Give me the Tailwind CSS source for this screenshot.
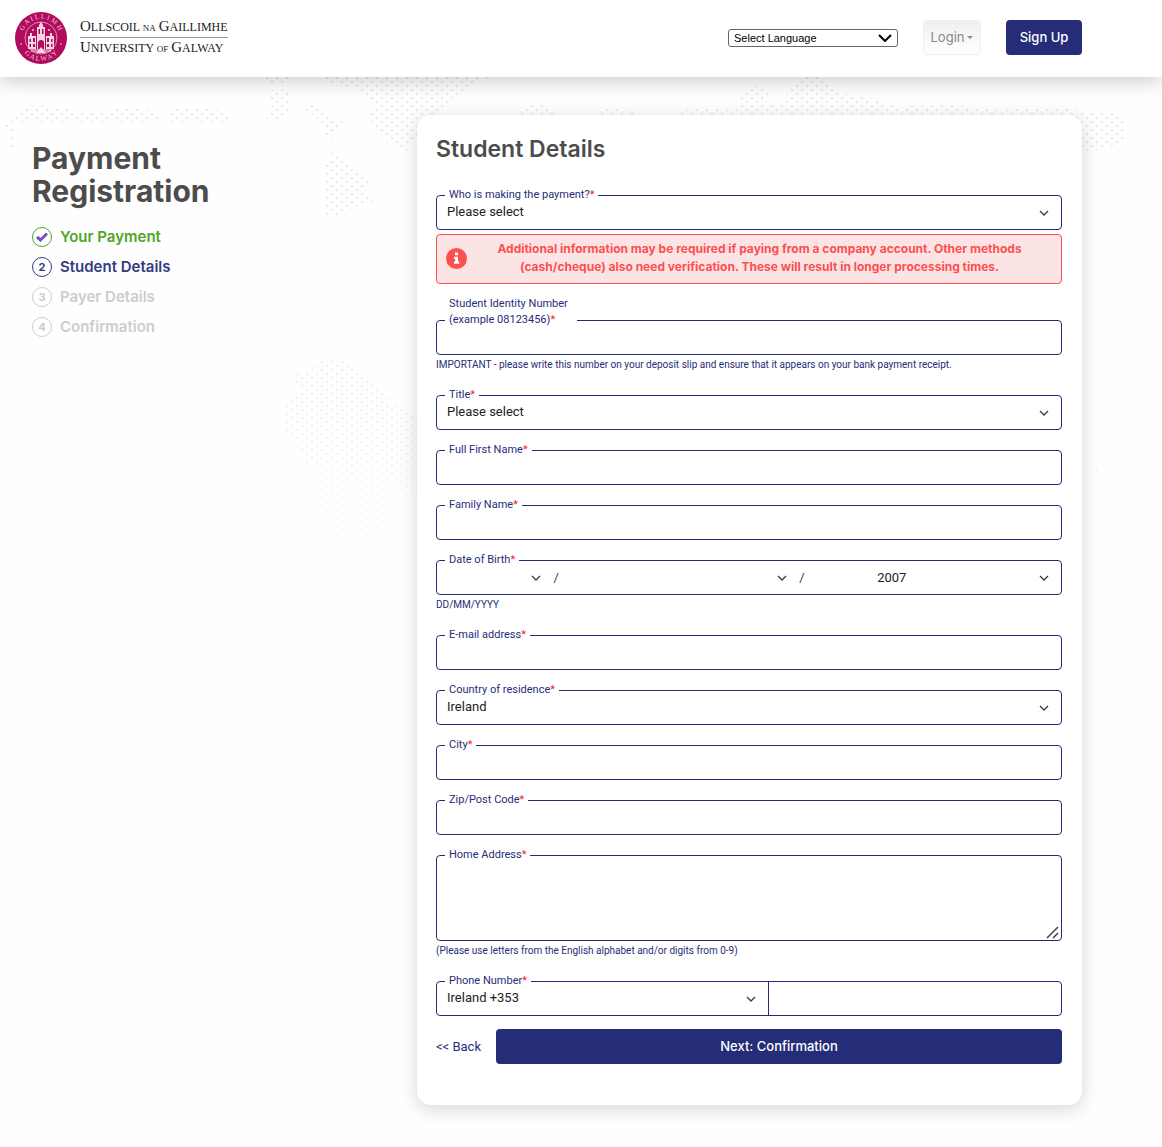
<!DOCTYPE html>
<html lang="en">
<head>
<meta charset="utf-8">
<meta name="viewport" content="width=device-width, initial-scale=1">
<title>Payment Registration</title>
<script src="https://cdn.jsdelivr.net/npm/@tailwindcss/browser@4"></script>
</head>
<body class="relative min-h-screen overflow-x-hidden bg-[#fefefe] font-['Roboto',sans-serif] text-[#262d78]">

<!-- dotted world map behind the page -->
<svg class="pointer-events-none absolute top-0 left-0 -z-10" width="1162" height="620" aria-hidden="true">
  <defs>
    <pattern id="dots" width="10" height="8" patternUnits="userSpaceOnUse">
      <circle cx="2" cy="2" r="1.3" fill="#e8e8e8"/><circle cx="7" cy="6" r="1.3" fill="#e8e8e8"/>
    </pattern>
    <linearGradient id="fade" x1="0" y1="0" x2="0" y2="1">
      <stop offset="0" stop-color="#fff"/><stop offset=".2" stop-color="#fff" stop-opacity=".95"/>
      <stop offset=".65" stop-color="#fff" stop-opacity=".6"/><stop offset=".97" stop-color="#fff" stop-opacity="0"/>
    </linearGradient>
    <mask id="m"><rect width="1162" height="620" fill="url(#fade)"/></mask>
  </defs>
  <g fill="url(#dots)" mask="url(#m)">
    <path d="M8 122 20 108 45 105 90 113 130 107 160 112V122zM165 122 175 108 210 107 232 117 240 122zM5 125H13V150H9V132L5 128z"/>
    <path d="M266 77H295L284 84H266zM270 90H290V108L279 122H265L272 108z"/>
    <path d="M322 77H490L470 88 455 95 432 118 417 140 405 152 390 144 376 132 368 112 374 104 360 90 330 84z"/>
    <path d="M305 109 312 103 328 114 345 123 335 130 333 138 325 136 322 122zM325 162 335 150 352 170 370 178 366 190 376 202 360 204 345 215H325z"/>
    <path d="M510 122 535 102 550 108 560 122zM590 122 610 106 640 114 655 122zM668 122 690 108 740 110 740 98 752 84 775 92 765 104 780 104 800 77H822L835 92 870 98 900 107 950 104 1000 110 1060 106 1085 112 1110 110 1125 117V140L1105 150H1082V122z"/>
    <path d="M286 402 298 390 294 374 310 372 325 358 345 362 365 376 382 388 390 402 417 415V495L395 502 388 520 372 542 350 560 335 575 328 600H308L315 548 322 530V472L304 462 298 446 285 430z"/>
    <path d="M1083 455H1088V462H1083zM1092 466H1098V474H1092zM1115 550H1125V566H1115z"/>
  </g>
</svg>

<header class="flex h-[77px] items-center justify-between bg-white pr-20 pb-[2px] pl-[14px] shadow-[0_4px_18px_rgba(0,0,0,0.2)]">
  <a href="#" class="flex items-center gap-3" aria-label="University of Galway">
    <svg width="54" height="54" viewBox="0 0 54 54" aria-hidden="true">
      <circle cx="27" cy="27" r="26" fill="#b00b5c"/>
      <circle cx="27" cy="27" r="16" fill="none" stroke="#dc93b8" stroke-width="1"/>
      <defs>
        <path id="arcTop" d="M8.500 31 A19 19 0 1 1 45.500 31"/>
        <path id="arcBottom" d="M5.500 34 A22.500 22.500 0 0 0 48.500 34"/>
      </defs>
      <g fill="#f0cade" font-family="Liberation Serif, serif" font-size="7">
        <text text-anchor="middle"><textPath href="#arcTop" startOffset="50%">G A I L L I M H</textPath></text>
        <text text-anchor="middle"><textPath href="#arcBottom" startOffset="50%">G A L W A Y</textPath></text>
      </g>
      <circle cx="7" cy="33" r=".8" fill="#f0cade"/><circle cx="47" cy="33" r=".8" fill="#f0cade"/>
      <g fill="#f3d5e4">
        <path d="M25 14 27 10.500 29 14V16H31V25H23V16H25z"/>
        <path d="M14 25H16V22H18V25H36V22H38V25H40V38H14z"/>
        <path d="M17 38H37V41H17z" opacity=".6"/>
      </g>
      <g fill="#b00b5c">
        <path d="M24.500 18H26V23H24.500zM28 18H29.500V23H28zM15.500 28H17V31H15.500zM15.500 33H17V36H15.500zM19 27H21V31H19zM19 33H21V36H19zM33 27H35V31H33zM33 33H35V36H33zM37 28H38.500V31H37zM37 33H38.500V36H37z"/>
        <path d="M24 38V32a3 3 0 0 1 6 0V38z"/>
        <path d="M22.500 25V38M31.500 25V38" stroke="#b00b5c"/>
        <path d="M18 18H20V20H18zM34 18H36V20H34z" fill="#dc93b8"/>
      </g>
      <path d="M22 42 27 36 32 42" fill="#f3d5e4"/>
    </svg>
    <span class="flex flex-col font-['Liberation_Serif',serif] text-[12px] leading-[18px] whitespace-nowrap text-[#222]">
      <span class="border-b border-[#999]"><span class="text-[15px]">O</span>LLSCOIL <span class="text-[9px]">NA</span> <span class="text-[15px]">G</span>AILLIMHE</span>
      <span><span class="text-[15px]">U</span>NIVERSITY <span class="text-[9px]">OF</span> <span class="text-[15px]">G</span>ALWAY</span>
    </span>
  </a>
  <div class="flex items-center gap-[25px]">
    <div class="grid w-[170px] items-center">
      <select aria-label="Select Language" class="col-start-1 row-start-1 h-[18px] appearance-none rounded-[3px] border border-[#666] bg-white pl-[5px] font-['Liberation_Sans',sans-serif] text-[11px] leading-4 text-black"><option>Select Language</option></select>
      <svg class="pointer-events-none col-start-1 row-start-1 mr-[6px] justify-self-end" width="14" height="8" viewBox="0 0 14 8" fill="none" stroke="#000" stroke-width="2" aria-hidden="true"><path d="M1 1 7 7 13 1"/></svg>
    </div>
    <button type="button" class="flex h-[35px] w-[58px] items-center justify-center gap-[3px] rounded-[4px] border border-[#efefef] bg-linear-to-b from-[#efefef] to-white font-['Inter',sans-serif] text-[13px] text-[#888]">Login
      <svg width="6" height="3" viewBox="0 0 6 3" fill="#888" aria-hidden="true"><path d="M0 0H6L3 3z"/></svg>
    </button>
    <button type="button" class="h-[35px] w-[76px] rounded-[4px] bg-[#262d78] font-['Inter',sans-serif] text-[13px] font-medium text-white">Sign Up</button>
  </div>
</header>

<main class="grid grid-cols-[385fr_665fr] items-start pt-[38px] pr-20 pb-[42px] pl-8">
  <aside class="pt-[27px] font-['Inter',sans-serif]">
    <h1 class="w-[180px] text-[30px] leading-[33px] font-bold text-[#4c4c4c]">Payment Registration</h1>
    <ol class="mt-[19px] flex flex-col gap-[10px] text-[15px] leading-5 font-semibold">
      <li class="flex items-center gap-2 text-[#4fa626]">
        <span class="flex size-5 items-center justify-center rounded-full border border-[#4fa626] bg-white"><svg width="12" height="10" viewBox="0 0 12 10" fill="none" stroke="#7a50c0" stroke-width="3" aria-hidden="true"><path d="M1 5 4.500 8 11 1.500"/></svg></span>Your Payment</li>
      <li class="flex items-center gap-2 text-[#343a82]"><span class="flex size-5 items-center justify-center rounded-full border border-[#343a82] bg-white text-[11px] font-bold">2</span>Student Details</li>
      <li class="flex items-center gap-2 text-[#cdcdcd]"><span class="flex size-5 items-center justify-center rounded-full border border-[#cdcdcd] bg-white text-[11px] font-bold">3</span>Payer Details</li>
      <li class="flex items-center gap-2 text-[#cdcdcd]"><span class="flex size-5 items-center justify-center rounded-full border border-[#cdcdcd] bg-white text-[11px] font-bold">4</span>Confirmation</li>
    </ol>
  </aside>

  <section class="rounded-[14px] bg-white pt-[18px] pr-5 pb-[41px] pl-[19px] shadow-[0_4px_18px_rgba(0,0,0,0.16)]">
    <h2 class="font-['Inter',sans-serif] text-[23px] leading-8 font-semibold text-[#4c4c4c]">Student Details</h2>

    <form class="mt-[22px] flex flex-col gap-3">
      <div class="flex flex-col">
        <label for="payer" class="z-10 ml-[9px] -mb-2 self-start bg-white px-1 text-[11px] leading-4">Who is making the payment?<span class="text-[#ff1a1a]">*</span></label>
        <div class="grid items-center">
          <select id="payer" class="col-start-1 row-start-1 h-[35px] appearance-none rounded-[4px] border border-[#262d78] bg-white px-[10px] pb-[2px] text-[13px] text-[#222]"><option>Please select</option></select>
          <svg class="pointer-events-none col-start-1 row-start-1 mr-[13px] justify-self-end" width="10" height="6" viewBox="0 0 10 6" fill="none" stroke="#343a40" stroke-width="1.300" aria-hidden="true"><path d="M1 1 5 5 9 1"/></svg>
        </div>
        <div class="mt-1 flex items-center rounded-[4px] border border-[#fb5050] bg-[#fde4e4] pt-[5px] pr-[9px] pb-[7px] pl-[9px] text-[#fb5050]">
          <svg width="21" height="21" viewBox="0 0 21 21" aria-hidden="true"><circle cx="10.500" cy="10.500" r="10.500" fill="#fb5050"/><path d="M9 4.500H12V7.300H9zM8 8.700H12V13.500H13.200V15.700H8V13.500H9.200V10.800H8z" fill="#fff"/></svg>
          <p class="mx-auto text-center font-['Inter',sans-serif] text-[12px] leading-[18px] font-bold">Additional information may be required if paying from a company account. Other methods<br>(cash/cheque) also need verification. These will result in longer processing times.</p>
        </div>
      </div>

      <div class="flex flex-col">
        <label for="sid" class="z-10 ml-[9px] -mb-2 w-[132px] self-start bg-white px-1 text-[11px] leading-4">Student Identity Number (example 08123456)<span class="text-[#ff1a1a]">*</span></label>
        <input id="sid" type="text" class="h-[35px] rounded-[4px] border border-[#262d78] bg-white px-[10px] text-[13px]">
        <p class="text-[10px] leading-5">IMPORTANT - please write this number on your deposit slip and ensure that it appears on your bank payment receipt.</p>
      </div>

      <div class="flex flex-col">
        <label for="title" class="z-10 ml-[9px] -mb-2 self-start bg-white px-1 text-[11px] leading-4">Title<span class="text-[#ff1a1a]">*</span></label>
        <div class="grid items-center">
          <select id="title" class="col-start-1 row-start-1 h-[35px] appearance-none rounded-[4px] border border-[#262d78] bg-white px-[10px] pb-[2px] text-[13px] text-[#222]"><option>Please select</option></select>
          <svg class="pointer-events-none col-start-1 row-start-1 mr-[13px] justify-self-end" width="10" height="6" viewBox="0 0 10 6" fill="none" stroke="#343a40" stroke-width="1.300" aria-hidden="true"><path d="M1 1 5 5 9 1"/></svg>
        </div>
      </div>

      <div class="flex flex-col">
        <label for="first" class="z-10 ml-[9px] -mb-2 self-start bg-white px-1 text-[11px] leading-4">Full First Name<span class="text-[#ff1a1a]">*</span></label>
        <input id="first" type="text" class="h-[35px] rounded-[4px] border border-[#262d78] bg-white px-[10px] text-[13px]">
      </div>

      <div class="flex flex-col">
        <label for="family" class="z-10 ml-[9px] -mb-2 self-start bg-white px-1 text-[11px] leading-4">Family Name<span class="text-[#ff1a1a]">*</span></label>
        <input id="family" type="text" class="h-[35px] rounded-[4px] border border-[#262d78] bg-white px-[10px] text-[13px]">
      </div>

      <div class="flex flex-col">
        <label for="day" class="z-10 ml-[9px] -mb-2 self-start bg-white px-1 text-[11px] leading-4">Date of Birth<span class="text-[#ff1a1a]">*</span></label>
        <div class="grid h-[35px] grid-cols-[116fr_8px_237fr_8px_253fr] items-center rounded-[4px] border border-[#262d78] bg-white text-[13px] text-[#444]">
          <div class="grid items-center">
            <select id="day" aria-label="Day of birth" class="col-start-1 row-start-1 h-8 w-full appearance-none px-[10px]"><option></option></select>
            <svg class="pointer-events-none col-start-1 row-start-1 mr-[12px] justify-self-end" width="10" height="6" viewBox="0 0 10 6" fill="none" stroke="#343a40" stroke-width="1.300" aria-hidden="true"><path d="M1 1 5 5 9 1"/></svg>
          </div>
          <span>/</span>
          <div class="grid items-center">
            <select aria-label="Month of birth" class="col-start-1 row-start-1 h-8 w-full appearance-none px-[10px]"><option></option></select>
            <svg class="pointer-events-none col-start-1 row-start-1 mr-[12px] justify-self-end" width="10" height="6" viewBox="0 0 10 6" fill="none" stroke="#343a40" stroke-width="1.300" aria-hidden="true"><path d="M1 1 5 5 9 1"/></svg>
          </div>
          <span>/</span>
          <div class="grid items-center">
            <select aria-label="Year of birth" class="col-start-1 row-start-1 h-8 w-full appearance-none pr-[10px] pl-[70px] text-[#222]"><option>2007</option></select>
            <svg class="pointer-events-none col-start-1 row-start-1 mr-[12px] justify-self-end" width="10" height="6" viewBox="0 0 10 6" fill="none" stroke="#343a40" stroke-width="1.300" aria-hidden="true"><path d="M1 1 5 5 9 1"/></svg>
          </div>
        </div>
        <p class="text-[10px] leading-5">DD/MM/YYYY</p>
      </div>

      <div class="flex flex-col">
        <label for="email" class="z-10 ml-[9px] -mb-2 self-start bg-white px-1 text-[11px] leading-4">E-mail address<span class="text-[#ff1a1a]">*</span></label>
        <input id="email" type="email" class="h-[35px] rounded-[4px] border border-[#262d78] bg-white px-[10px] text-[13px]">
      </div>

      <div class="flex flex-col">
        <label for="country" class="z-10 ml-[9px] -mb-2 self-start bg-white px-1 text-[11px] leading-4">Country of residence<span class="text-[#ff1a1a]">*</span></label>
        <div class="grid items-center">
          <select id="country" class="col-start-1 row-start-1 h-[35px] appearance-none rounded-[4px] border border-[#262d78] bg-white px-[10px] pb-[2px] text-[13px] text-[#222]"><option>Ireland</option></select>
          <svg class="pointer-events-none col-start-1 row-start-1 mr-[13px] justify-self-end" width="10" height="6" viewBox="0 0 10 6" fill="none" stroke="#343a40" stroke-width="1.300" aria-hidden="true"><path d="M1 1 5 5 9 1"/></svg>
        </div>
      </div>

      <div class="flex flex-col">
        <label for="city" class="z-10 ml-[9px] -mb-2 self-start bg-white px-1 text-[11px] leading-4">City<span class="text-[#ff1a1a]">*</span></label>
        <input id="city" type="text" class="h-[35px] rounded-[4px] border border-[#262d78] bg-white px-[10px] text-[13px]">
      </div>

      <div class="flex flex-col">
        <label for="zip" class="z-10 ml-[9px] -mb-2 self-start bg-white px-1 text-[11px] leading-4">Zip/Post Code<span class="text-[#ff1a1a]">*</span></label>
        <input id="zip" type="text" class="h-[35px] rounded-[4px] border border-[#262d78] bg-white px-[10px] text-[13px]">
      </div>

      <div class="flex flex-col">
        <label for="address" class="z-10 ml-[9px] -mb-2 self-start bg-white px-1 text-[11px] leading-4">Home Address<span class="text-[#ff1a1a]">*</span></label>
        <div class="grid">
          <textarea id="address" class="col-start-1 row-start-1 h-[86px] resize-none rounded-[4px] border border-[#262d78] bg-white px-[10px] text-[13px]"></textarea>
          <svg class="pointer-events-none col-start-1 row-start-1 mr-[3px] mb-[2px] self-end justify-self-end" width="13" height="13" viewBox="0 0 13 13" stroke="#444" stroke-width="1.500" aria-hidden="true"><path d="M1 12 12 1M7 12 12 7"/></svg>
        </div>
        <p class="text-[10px] leading-5">(Please use letters from the English alphabet and/or digits from 0-9)</p>
      </div>

      <div class="flex flex-col">
        <label for="phone" class="z-10 ml-[9px] -mb-2 self-start bg-white px-1 text-[11px] leading-4">Phone Number<span class="text-[#ff1a1a]">*</span></label>
        <div class="grid h-[35px] grid-cols-[331fr_293fr] items-stretch rounded-[4px] border border-[#262d78] bg-white text-[13px] text-[#222]">
          <div class="grid items-center">
            <select aria-label="Country code" class="col-start-1 row-start-1 h-full w-full appearance-none px-[10px] pb-[2px]"><option>Ireland +353</option></select>
            <svg class="pointer-events-none col-start-1 row-start-1 mr-[12px] justify-self-end" width="10" height="6" viewBox="0 0 10 6" fill="none" stroke="#343a40" stroke-width="1.300" aria-hidden="true"><path d="M1 1 5 5 9 1"/></svg>
          </div>
          <input id="phone" type="tel" class="min-w-0 border-l border-[#262d78] px-[10px]">
        </div>
      </div>

      <div class="mt-px flex items-center gap-3">
        <a href="#" class="w-12 text-[13px] whitespace-nowrap">&lt;&lt; Back</a>
        <button type="submit" class="h-[35px] flex-1 rounded-[4px] bg-[#262d78] font-['Inter',sans-serif] text-[13px] font-medium text-white">Next: Confirmation</button>
      </div>
    </form>
  </section>
</main>
</body>
</html>
